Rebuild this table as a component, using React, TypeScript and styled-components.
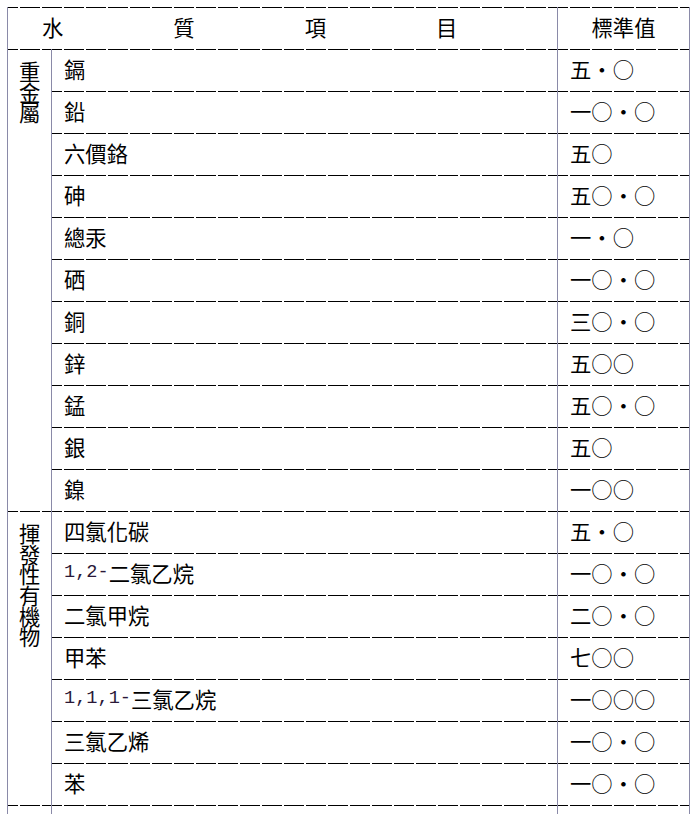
import React from 'react';
import styled, { createGlobalStyle } from 'styled-components';

const RULE_COL = '#8a8aa8';
const DASH = 'repeating-linear-gradient(to right, #000 0 11px, transparent 11px 13px, #000 13px 22px)';
const CJK = '"Noto Sans CJK TC", "Noto Sans CJK JP", sans-serif';

interface Row {
  name: string;
  value: string;
}

interface Group {
  label: string;
  rows: Row[];
}

const GROUPS: Group[] = [
  {
    label: '重金屬',
    rows: [
      { name: '鎘', value: '五・○' },
      { name: '鉛', value: '一○・○' },
      { name: '六價鉻', value: '五○' },
      { name: '砷', value: '五○・○' },
      { name: '總汞', value: '一・○' },
      { name: '硒', value: '一○・○' },
      { name: '銅', value: '三○・○' },
      { name: '鋅', value: '五○○' },
      { name: '錳', value: '五○・○' },
      { name: '銀', value: '五○' },
      { name: '鎳', value: '一○○' },
    ],
  },
  {
    label: '揮發性有機物',
    rows: [
      { name: '四氯化碳', value: '五・○' },
      { name: '1,2-二氯乙烷', value: '一○・○' },
      { name: '二氯甲烷', value: '二○・○' },
      { name: '甲苯', value: '七○○' },
      { name: '1,1,1-三氯乙烷', value: '一○○○' },
      { name: '三氯乙烯', value: '一○・○' },
      { name: '苯', value: '一○・○' },
    ],
  },
  // next group, cut off at the bottom of the page
  { label: '', rows: [{ name: '', value: '' }] },
];

const GlobalStyle = createGlobalStyle`
  html, body {
    margin: 0;
    padding: 0;
    background: #fff;
    overflow: hidden;
  }

  body {
    font-family: ${CJK};
    color: #000;
  }
`;

const Page = styled.div`
  padding: 7px 0 0 7px;
`;

const Table = styled.div`
  display: grid;
  grid-template-columns: 44px 506px 132px;
  grid-auto-rows: 42px;
  width: max-content;
  border-right: 1px solid ${RULE_COL};
  font-size: 21.33px;
  line-height: 1.2;
`;

const Cell = styled.div`
  box-sizing: border-box;
  display: flex;
  align-items: center;
  padding-bottom: 2px;
  border-left: 1px solid ${RULE_COL};
  background-image: ${DASH};
  background-origin: border-box;
  background-size: 100% 1px;
  background-repeat: no-repeat;
  white-space: nowrap;
`;

const HeadTitle = styled(Cell)`
  grid-column: span 2;
  gap: 110px;
  padding-left: 34px;
`;

const HeadValue = styled(Cell)`
  justify-content: center;
`;

const GroupCell = styled(Cell)<{ $rows: number }>`
  grid-row: span ${(p) => p.$rows};
  align-items: flex-start;
  justify-content: center;
  padding-top: 12px;
`;

const GroupLabel = styled.span`
  writing-mode: vertical-rl;
  text-orientation: upright;
  line-height: 1;
  letter-spacing: -0.6px;
`;

const NameCell = styled(Cell)`
  padding-left: 12px;
`;

const ValueCell = styled(Cell)`
  padding-left: 12px;
`;

const Digits = styled.span`
  font-family: "Liberation Mono", monospace;
  font-size: 18.6px;
  color: #2a1838;
`;

function Name ({ text }: { text: string }): React.ReactElement {
  const m = /^([0-9,-]+)(.*)$/.exec(text);

  if (!m) {
    return <>{text}</>;
  }

  return (
    <>
      <Digits>{m[1]}</Digits>
      {m[2]}
    </>
  );
}

export default function App (): React.ReactElement {
  return (
    <Page>
      <GlobalStyle />
      <Table>
        <HeadTitle>
          <span>水</span>
          <span>質</span>
          <span>項</span>
          <span>目</span>
        </HeadTitle>
        <HeadValue>標準值</HeadValue>
        {GROUPS.map((group, gi) => (
          <React.Fragment key={gi}>
            <GroupCell $rows={group.rows.length}>
              <GroupLabel>{group.label}</GroupLabel>
            </GroupCell>
            {group.rows.map((row, ri) => (
              <React.Fragment key={ri}>
                <NameCell><Name text={row.name} /></NameCell>
                <ValueCell>{row.value}</ValueCell>
              </React.Fragment>
            ))}
          </React.Fragment>
        ))}
      </Table>
    </Page>
  );
}
